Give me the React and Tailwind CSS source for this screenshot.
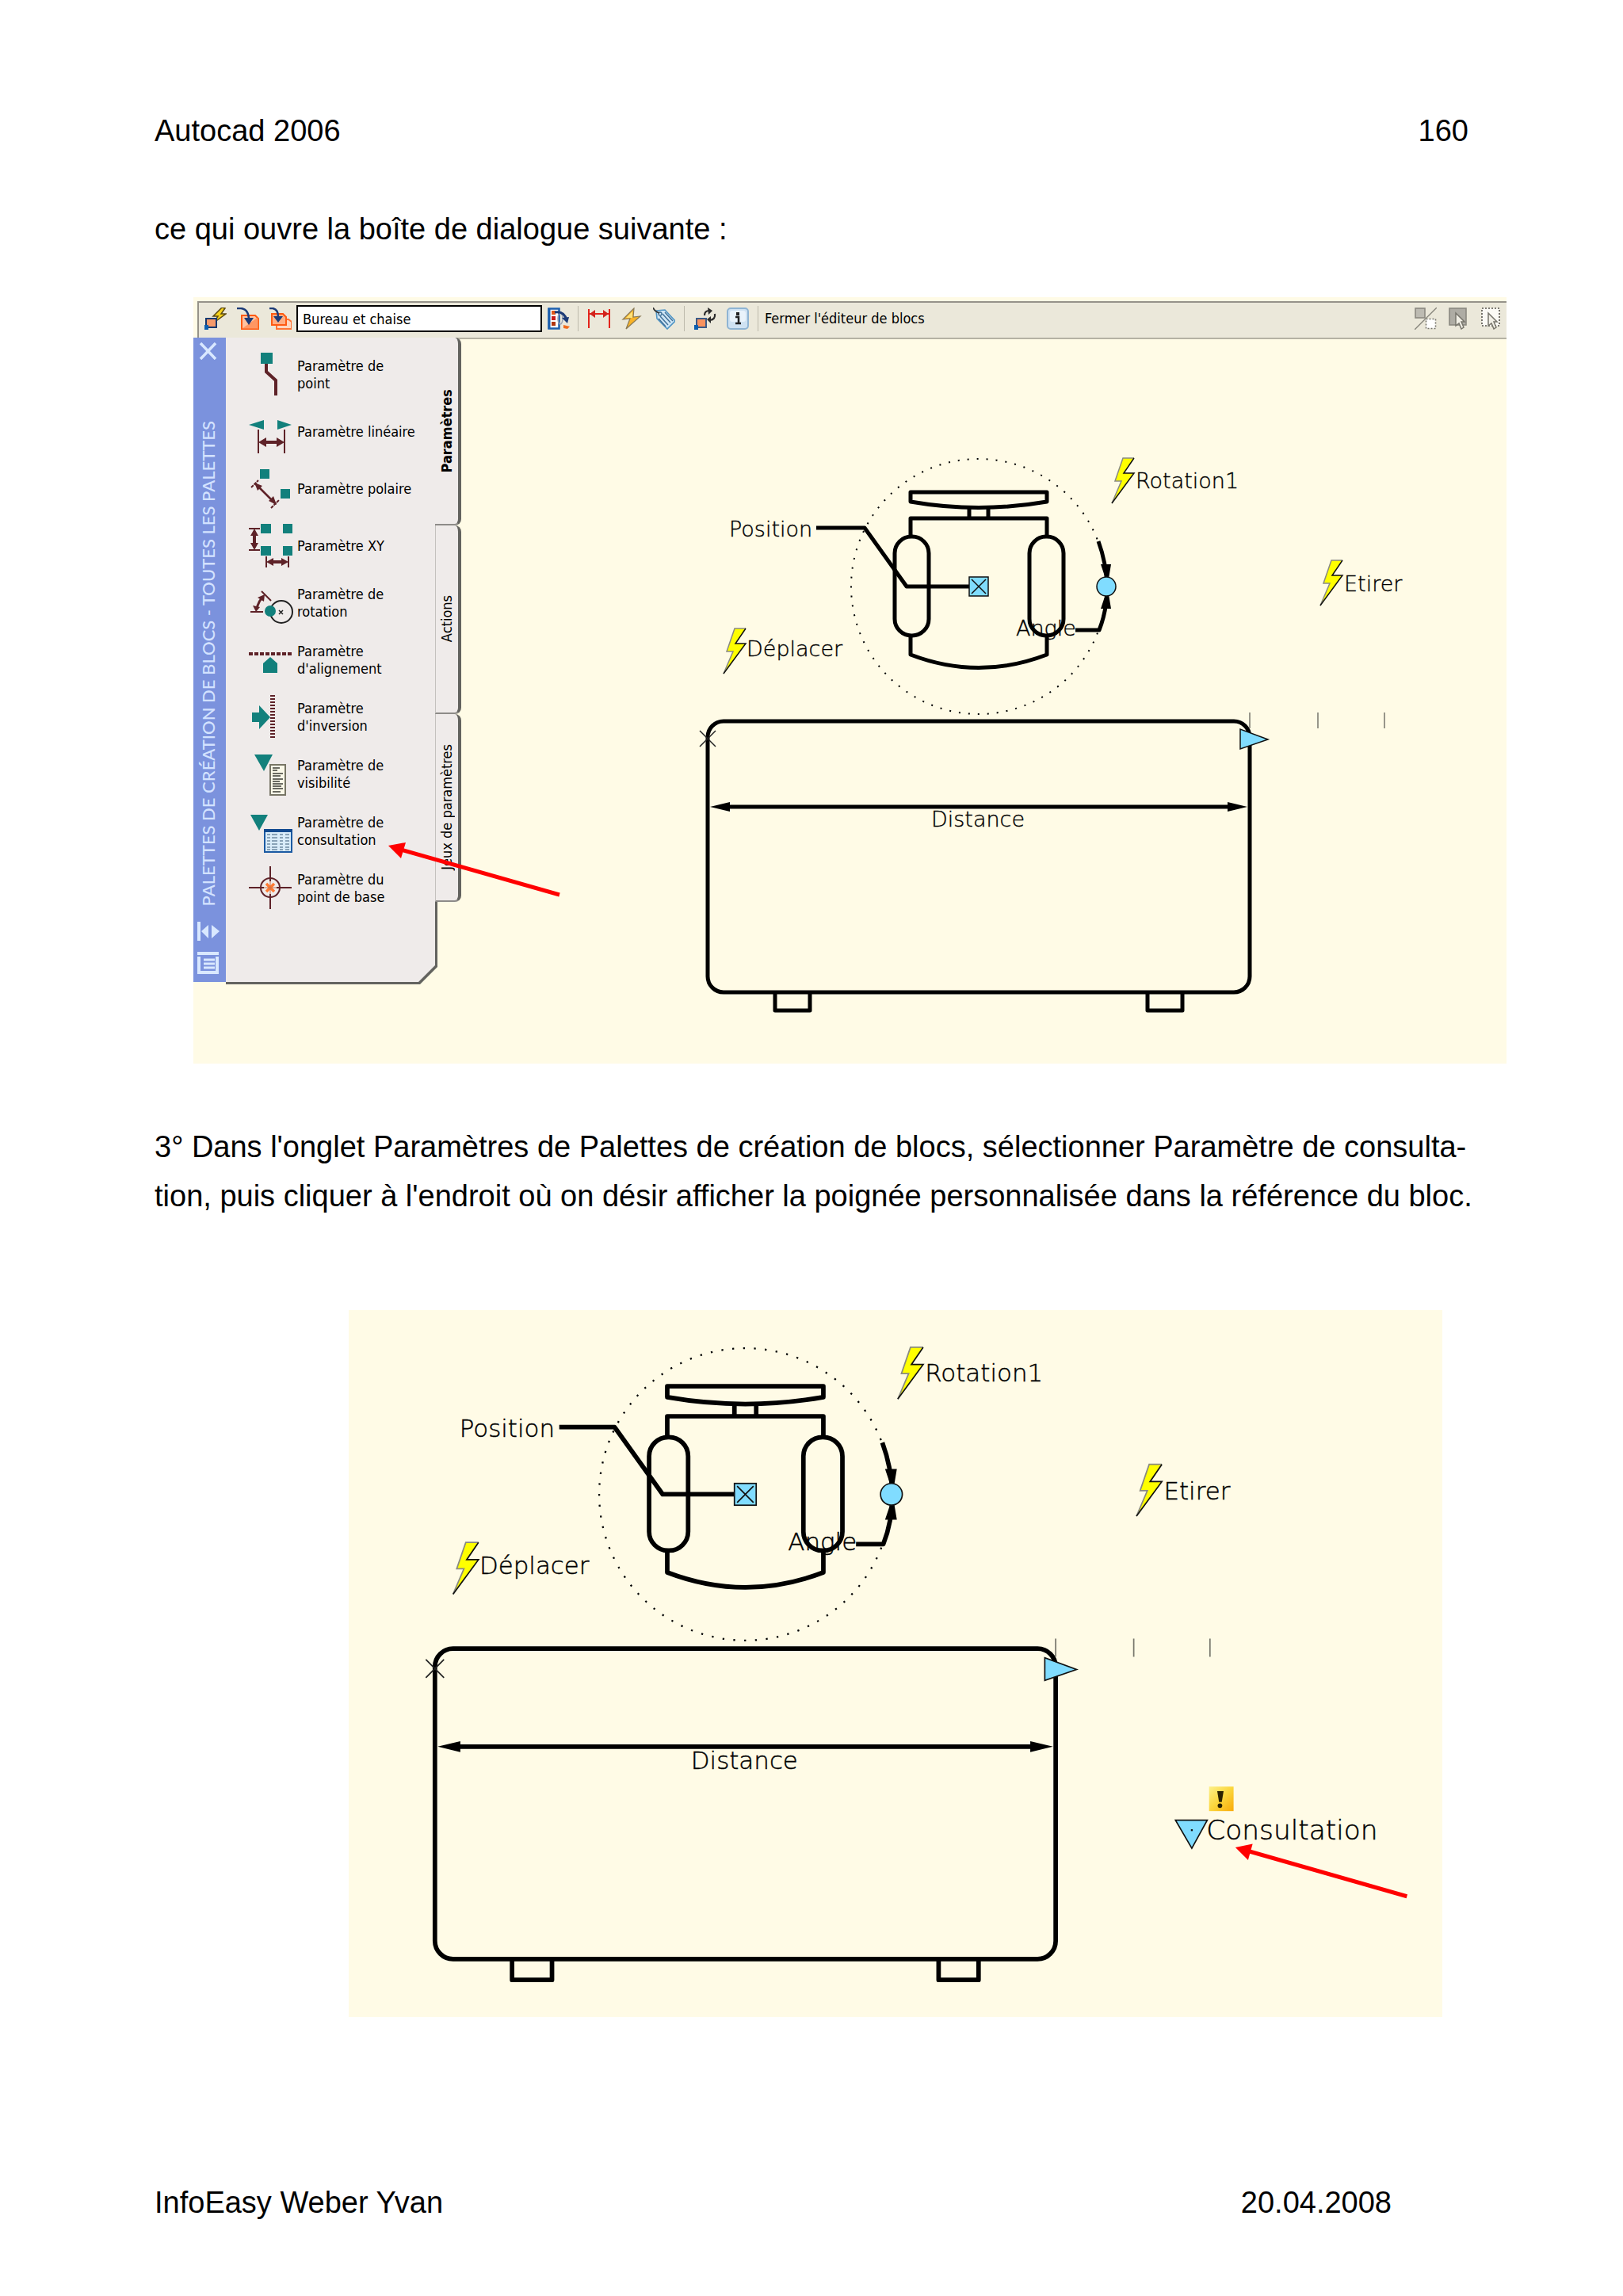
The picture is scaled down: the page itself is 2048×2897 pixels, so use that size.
import React from "react";

const TEAL = "#12807c";
const MAROON = "#5e2228";
const GRIP = "#80dcff";

/* ---------- Toolbar icons (28 x 28) ---------- */

function Icon({ children }) {
  return (
    <svg viewBox="0 0 28 28" className="h-7 w-7 shrink-0" fill="none" aria-hidden="true">
      {children}
    </svg>
  );
}

const BlockBoltIcon = () => (
  <Icon>
    <path d="M22 0L11 11h6l-5 8 15-11h-6l5-7z" fill="#f6d21c" stroke="#5c4a10" strokeWidth="1.5" />
    <rect x="2" y="14" width="13" height="11" fill="#f59a6b" stroke="#14386f" strokeWidth="2" />
    <rect x="0" y="22" width="5" height="6" fill="#0b5fb0" />
  </Icon>
);

const SaveBlockIcon = () => (
  <Icon>
    <path d="M6 10h17l4 4v13H6z" fill="#ffc3a0" stroke="#ff5a12" strokeWidth="2" />
    <path d="M6 27L27 12v15z" fill="#ff8548" opacity="0.7" />
    <path d="M0 1h5q10 1 10 15" stroke="#1c3b77" strokeWidth="2.5" />
    <path d="M9 13h12l-6 9z" fill="#1c3b77" />
  </Icon>
);

const SaveBlockAsIcon = () => (
  <Icon>
    <path d="M9 15h15l4 3v9H9z" fill="#ffd6bf" stroke="#ff7434" strokeWidth="2" />
    <path d="M3 8h14l4 4v10H3z" fill="#ffae83" stroke="#ff5a12" strokeWidth="2" />
    <path d="M0 1h4q7 1 7 11" stroke="#1c3b77" strokeWidth="2.5" />
    <path d="M5 11h12l-6 8z" fill="#1c3b77" />
  </Icon>
);

const AuthoringIcon = () => (
  <Icon>
    <rect x="1.5" y="1.5" width="13" height="25" fill="#fff" stroke="#1c5fae" strokeWidth="2.5" />
    <path d="M2 1v26" stroke="#1c5fae" strokeWidth="3" />
    <rect x="5" y="4" width="5" height="5" fill="#e0581c" />
    <rect x="5" y="11" width="5" height="5" fill="#c81c1c" />
    <rect x="5" y="18" width="5" height="5" fill="#b0360f" />
    <ellipse cx="16" cy="14" rx="3" ry="7" stroke="#9aa3b5" strokeWidth="1.5" />
    <path d="M9 6q12-2 15 10" stroke="#1c3b77" strokeWidth="3" />
    <path d="M18 13l9-1-2 8z" fill="#1c3b77" />
    <path d="M20 22l4 1 4 1-3 3-5-1z" fill="#f06a1c" />
  </Icon>
);

const DimensionIcon = () => (
  <Icon>
    <path d="M1 2v24M27 2v24M2 8h24" stroke="#e3241c" strokeWidth="2" />
    <path d="M2 8l7-5v10zM26 8l-7-5v10z" fill="#d2231c" />
  </Icon>
);

const ActionIcon = () => (
  <Icon>
    <path d="M17 1L3 15l9-1-5 13L25 11l-9 1z" fill="#f9b327" stroke="#8a7a55" strokeWidth="1.2" />
    <path d="M15 5L7 13h8z" fill="#ffe177" />
  </Icon>
);

const TagIcon = () => (
  <Icon>
    <path d="M4 4l11-1 13 14-10 10L5 14z" fill="#cfe6f5" stroke="#4f94c4" strokeWidth="1.6" />
    <path d="M9 11l10 11M12 8l10 11M15 6l10 11M7 14l9 10" stroke="#3f6f97" strokeWidth="1.4" />
    <circle cx="9" cy="8" r="2" stroke="#3d6d94" strokeWidth="1.3" />
    <path d="M0 0q2 5 8 7" stroke="#333" strokeWidth="1.8" />
  </Icon>
);

const SyncBlockIcon = () => (
  <Icon>
    <rect x="3" y="14" width="12" height="11" fill="#f8925f" stroke="#3b5a86" strokeWidth="2" />
    <rect x="0" y="22" width="5" height="6" fill="#0b5fb0" />
    <path d="M13 10q0-6 6-6M26 8q1 7-6 8" stroke="#2b2b2b" strokeWidth="2.2" />
    <path d="M17 0l6 4-5 5zM21 11v9l-5-5z" fill="#2b2b2b" />
  </Icon>
);

const InfoIcon = () => (
  <Icon>
    <rect x="1" y="1" width="26" height="26" rx="4" fill="#cfe2f2" stroke="#8fb4d3" strokeWidth="2" />
    <rect x="4" y="4" width="20" height="14" rx="3" fill="#e9f3fb" />
    <path d="M11 12h4v8M11 20h7" stroke="#222" strokeWidth="2.5" />
    <rect x="12" y="6" width="4" height="4" fill="#222" />
  </Icon>
);

const VisibilityModeIcon = () => (
  <Icon>
    <path d="M0 28L28 0" stroke="#85837a" strokeWidth="1.3" />
    <rect x="1" y="1" width="12" height="12" fill="#bdbbb2" stroke="#8b8980" strokeWidth="1.6" />
    <rect x="14.5" y="14.5" width="12" height="12" fill="#fff" stroke="#77756c" strokeWidth="1.6" strokeDasharray="2 2" />
  </Icon>
);

const Cursor = () => (
  <path d="M11 7l11 11h-4l3 7-3 2-3-7-4 3z" fill="#f1efe6" stroke="#77756c" strokeWidth="1.5" />
);

const MakeVisibleIcon = () => (
  <Icon>
    <rect x="3" y="1" width="21" height="21" fill="#aeaca4" stroke="#8b8980" strokeWidth="1.6" />
    <Cursor />
  </Icon>
);

const MakeInvisibleIcon = () => (
  <Icon>
    <rect x="3" y="1" width="22" height="22" fill="#fbfaf5" stroke="#55534c" strokeWidth="1.6" strokeDasharray="2 2" />
    <Cursor />
  </Icon>
);

function ToolButton({ label, children }) {
  return (
    <button type="button" aria-label={label} className="flex h-full w-[41px] shrink-0 items-center justify-center">
      {children}
    </button>
  );
}

const Separator = () => <span className="h-8 w-px shrink-0 bg-[#bdbaac]" />;

function Toolbar() {
  return (
    <div className="ml-[5px] flex h-12 items-center border-y-2 border-l-2 border-t-[#96938a] border-b-[#b5b2a3] border-l-[#96938a] bg-[#ebe8da] pb-1">
      <ToolButton label="Modifier ou créer une définition de bloc"><BlockBoltIcon /></ToolButton>
      <ToolButton label="Enregistrer le bloc"><SaveBlockIcon /></ToolButton>
      <ToolButton label="Enregistrer le bloc sous"><SaveBlockAsIcon /></ToolButton>
      <input
        aria-label="Nom du bloc"
        defaultValue="Bureau et chaise"
        className="h-[34px] w-[310px] min-w-0 border-2 border-black bg-white px-[6px] text-[18px] leading-6 text-black"
      />
      <ToolButton label="Palettes de création de blocs"><AuthoringIcon /></ToolButton>
      <div className="flex items-center gap-[5px] pl-1">
        <Separator />
        <div className="flex">
          <ToolButton label="Paramètre"><DimensionIcon /></ToolButton>
          <ToolButton label="Action"><ActionIcon /></ToolButton>
          <ToolButton label="Définir un attribut"><TagIcon /></ToolButton>
        </div>
        <Separator />
        <div className="flex">
          <ToolButton label="Mettre à jour le texte"><SyncBlockIcon /></ToolButton>
          <ToolButton label="En savoir plus"><InfoIcon /></ToolButton>
        </div>
        <Separator />
      </div>
      <button type="button" className="whitespace-nowrap pl-2 text-[18px] leading-6 text-black">
        Fermer l'éditeur de blocs
      </button>
      <div className="ml-auto flex">
        <ToolButton label="Mode de visibilité"><VisibilityModeIcon /></ToolButton>
        <ToolButton label="Rendre visible"><MakeVisibleIcon /></ToolButton>
        <ToolButton label="Rendre invisible"><MakeInvisibleIcon /></ToolButton>
      </div>
    </div>
  );
}

/* ---------- Palette icons (54 x 54) ---------- */

const paletteItems = [
  {
    lines: ["Paramètre de", "point"],
    art: (
      <>
        <path d="M22 13v11l12 11v19" stroke={MAROON} strokeWidth="4" />
        <rect x="15" y="0" width="15" height="14" fill={TEAL} />
      </>
    ),
  },
  {
    lines: ["Paramètre linéaire"],
    art: (
      <>
        <path d="M0 19l19-6v12zM54 19l-18-6v12z" fill={TEAL} />
        <path d="M12 25v30M45 25v30" stroke={MAROON} strokeWidth="2" />
        <path d="M16 41h25" stroke={MAROON} strokeWidth="4" />
        <path d="M12 41l10-6v12zM45 41l-10-6v12z" fill={MAROON} />
      </>
    ),
  },
  {
    lines: ["Paramètre polaire"],
    art: (
      <>
        <path d="M14 3h12v12H14zM40 28h12v12H40z" fill={TEAL} />
        <path d="M8 21l26 26" stroke={MAROON} strokeWidth="2.5" />
        <path d="M3 26l9-9M28 52l10-10" stroke={MAROON} strokeWidth="2" strokeDasharray="4 1" />
        <path d="M7 20l10 4-6 6zM35 48l-4-11-6 6z" fill={MAROON} />
      </>
    ),
  },
  {
    lines: ["Paramètre XY"],
    art: (
      <>
        <path d="M15 0h13v12H15zM43 0h12v12H43zM15 28h13v12H15zM43 28h12v12H43z" fill={TEAL} />
        <path d="M0 6h14M0 33h14M22 41v14M50 41v14" stroke={MAROON} strokeWidth="2" />
        <path d="M7 10v20M26 48h20" stroke={MAROON} strokeWidth="4" />
        <path d="M7 6l5 9H2zM7 33l5-9H2zM22 48l9-5v10zM50 48l-9-5v10z" fill={MAROON} />
      </>
    ),
  },
  {
    lines: ["Paramètre de", "rotation"],
    art: (
      <>
        <circle cx="41" cy="39" r="14" stroke="#222" strokeWidth="2" />
        <path d="M38 37l5 5M43 37l-5 5" stroke="#222" strokeWidth="1.5" />
        <circle cx="27" cy="38" r="7" fill={TEAL} />
        <path d="M2 39h16M16 13l12 12" stroke={MAROON} strokeWidth="2" />
        <path d="M10 35q2-9 7-14" stroke={MAROON} strokeWidth="3" />
        <path d="M9 39l-4-8 9 2zM20 17l-1 9-8-5z" fill={MAROON} />
      </>
    ),
  },
  {
    lines: ["Paramètre", "d'alignement"],
    art: (
      <>
        <path d="M0 20h54" stroke={MAROON} strokeWidth="4" strokeDasharray="5 2" />
        <path d="M27 24l9 8v12H18V32z" fill={TEAL} />
      </>
    ),
  },
  {
    lines: ["Paramètre", "d'inversion"],
    art: (
      <>
        <path d="M30 0v54" stroke={MAROON} strokeWidth="6" strokeDasharray="2 2" />
        <path d="M4 22h9v-9l14 15-14 15v-9H4z" fill={TEAL} />
      </>
    ),
  },
  {
    lines: ["Paramètre de", "visibilité"],
    art: (
      <>
        <path d="M7 3h23L19 24z" fill={TEAL} />
        <rect x="27" y="16" width="19" height="38" fill="#faf8e8" stroke="#777565" strokeWidth="2" />
        <path
          d="M30 20h9M30 23h6M30 27h13M30 30h10M30 34h13M30 37h9M30 40h13M30 43h11M30 46h13M30 50h10"
          stroke="#3b3b35"
          strokeWidth="1.3"
        />
      </>
    ),
  },
  {
    lines: ["Paramètre de", "consultation"],
    art: (
      <>
        <path d="M2 7h22L13 27z" fill={TEAL} />
        <rect x="20" y="26" width="34" height="28" fill="#d9ecfa" stroke="#1b5aa2" strokeWidth="2" />
        <path d="M19 27h36" stroke="#124a90" strokeWidth="4" />
        <path
          d="M23 32h4M29 32h7M39 32h4M46 32h5M23 36h4M29 36h7M39 36h4M46 36h5M23 40h4M29 40h7M39 40h4M46 40h5M23 44h4M29 44h7M39 44h4M46 44h5M23 48h4M29 48h7M39 48h4M46 48h5M23 51h4M29 51h7M39 51h4M46 51h5"
          stroke="#6f8aa3"
          strokeWidth="1.5"
        />
      </>
    ),
  },
  {
    lines: ["Paramètre du", "point de base"],
    art: (
      <>
        <path d="M27 0v19M27 35v19M0 27h19M35 27h19" stroke={MAROON} strokeWidth="2" />
        <circle cx="27" cy="27" r="12" stroke={MAROON} strokeWidth="2" />
        <path d="M22 22l10 10M32 22L22 32" stroke="#ff7a33" strokeWidth="3.5" />
        <path d="M27 19v16M19 27h16" stroke="#c9724a" strokeWidth="1" />
      </>
    ),
  },
];

const tabs = [
  { name: "Paramètres", active: true },
  { name: "Actions", active: false },
  { name: "Jeux de paramètres", active: false },
];

function PaletteTitleBar() {
  return (
    <div className="flex h-[813px] w-[41px] shrink-0 flex-col items-center bg-[#7b92dd] pt-[6px] pr-1 pb-[10px]">
      <button type="button" aria-label="Fermer la palette">
        <svg viewBox="0 0 24 22" className="block h-[22px] w-6" aria-hidden="true">
          <path d="M2 1l19 20M21 1L2 21" stroke="#d9e8ff" strokeWidth="3.5" />
        </svg>
      </button>
      <h2 className="mt-auto rotate-180 whitespace-nowrap font-['Lato'] text-[22px] leading-[28px] font-medium text-[#d3e2ff] [writing-mode:vertical-rl]">
        PALETTES DE CRÉATION DE BLOCS - TOUTES LES PALETTES
      </h2>
      <div className="mt-[20px] flex flex-col gap-[14px]">
        <button type="button" aria-label="Masquer automatiquement">
          <svg viewBox="0 0 28 24" className="block h-6 w-7" fill="#d9e8ff" aria-hidden="true">
            <path d="M0 0h4v24H0zM14 4v17L5 12zM18 4l10 8-10 9z" />
          </svg>
        </button>
        <button type="button" aria-label="Propriétés">
          <svg viewBox="0 0 28 28" className="block h-7 w-7" aria-hidden="true">
            <path d="M0 2h27" stroke="#d9e8ff" strokeWidth="4" />
            <path d="M2 6v20h23V6" stroke="#d9e8ff" strokeWidth="4" fill="none" />
            <path d="M8 10h14M8 15h14M8 20h14" stroke="#d9e8ff" strokeWidth="3" />
          </svg>
        </button>
      </div>
    </div>
  );
}

function Palette() {
  return (
    <aside className="flex h-[816px] shrink-0">
      <PaletteTitleBar />
      <div className="w-[267px] bg-[#63635f] [clip-path:polygon(0_0,100%_0,100%_calc(100%-22px),calc(100%-22px)_100%,0_100%)]">
        <ul className="mr-[3px] h-[813px] bg-[#efebea] pt-[10px] pl-[29px] [clip-path:polygon(0_0,100%_0,100%_calc(100%-21px),calc(100%-21px)_100%,0_100%)]">
          {paletteItems.map((item) => (
            <li key={item.lines.join(" ")}>
              <button type="button" className="flex h-[72px] w-full items-center gap-[7px] text-left">
                <svg viewBox="0 0 54 54" className="h-[54px] w-[54px] shrink-0 overflow-visible" fill="none" aria-hidden="true">
                  {item.art}
                </svg>
                <span className="whitespace-nowrap pt-[2px] text-[18px] leading-[22px] text-black">
                  {item.lines.map((line) => (
                    <span key={line} className="block">{line}</span>
                  ))}
                </span>
              </button>
            </li>
          ))}
        </ul>
      </div>
      <div role="tablist" aria-orientation="vertical" className="relative -ml-[3px] flex h-[712px] w-[33px] flex-col">
        {tabs.map((tab) => (
          <button
            key={tab.name}
            type="button"
            role="tab"
            aria-selected={tab.active}
            className={
              "flex flex-1 items-center justify-center rounded-r-[8px] border-r-[4px] border-r-[#63635f] border-b-2 border-b-[#8d8b88] bg-[#efebea] text-[18px] leading-[22px] text-black " +
              (tab.active ? "font-bold" : "border-l border-l-[#c4c1be]")
            }
          >
            <span className="rotate-180 whitespace-nowrap [writing-mode:vertical-rl]">{tab.name}</span>
          </button>
        ))}
      </div>
    </aside>
  );
}

/* ---------- CAD drawing ---------- */

function Bolt({ x, y }) {
  return (
    <g transform={`translate(${x} ${y})`}>
      <path d="M14 0h14L15 19h13L0 57l12-28H4z" fill="#ffff00" />
      <path d="M28 0H14L4 29h8L0 57" fill="none" stroke="#8a8a80" strokeWidth="1.5" />
      <path d="M28 0L15 19h13L0 57" fill="none" stroke="#111" strokeWidth="1.5" />
    </g>
  );
}

function RedArrow({ x, y }) {
  return (
    <g transform={`translate(${x} ${y})`}>
      <path d="M16 5L216 62" stroke="#ff0000" strokeWidth="5" />
      <path d="M0 0l22-4-6 20z" fill="#ff0000" />
    </g>
  );
}

function Drawing({ viewBox, children }) {
  return (
    <svg viewBox={viewBox} className="block w-full" fill="none" stroke="none" role="img" aria-label="Bloc bureau et chaise">
      <circle cx="1235" cy="740" r="161" stroke="#000" strokeWidth="2" strokeDasharray="2 10" />

      <g stroke="#000" strokeWidth="5" strokeLinejoin="round">
        <path d="M1149 621h172v12q-86 15-172 0z" />
        <path d="M1223 641v13M1247 641v13" />
        <path d="M1149 677v-23h172v23" />
        <rect x="1129" y="677" width="43" height="125" rx="21" />
        <rect x="1299" y="677" width="43" height="125" rx="21" />
        <path d="M1149 802v24q86 33 172 0v-24" />
        <path d="M1030 666h61l53 74h79" />
        <path d="M1357 795h30q10-25 10-55" />
        <path d="M1386 683q10 27 11 57" />
        <rect x="893" y="910" width="684" height="342" rx="20" />
        <path d="M978 1252v23h44v-23M1448 1252v23h44v-23" />
        <path d="M910 1018h650" />
      </g>
      <path d="M1389 712h13l-3 18h-4zM1389 768h13l-3-18h-4z" fill="#000" />
      <path d="M896 1018l25-6v12zM1574 1018l-25-6v12z" fill="#000" />
      <path d="M883 922l20 20M903 922l-20 20" stroke="#222" strokeWidth="1.5" />
      <path d="M1577 899v20M1663 899v20M1747 899v20" stroke="#77766c" strokeWidth="1.5" />

      <g fill={GRIP} stroke="#111" strokeWidth="1.5">
        <rect x="1223" y="728" width="24" height="24" />
        <path d="M1226 731l18 18M1244 731l-18 18" />
        <circle cx="1396" cy="740" r="12" />
        <path d="M1565 920v25l35-12z" />
      </g>

      <Bolt x={1403} y={578} />
      <Bolt x={1666} y={707} />
      <Bolt x={913} y={793} />

      <g fill="#000" stroke="#000" strokeWidth="0.4" className="font-['DejaVu_Sans'] text-[27px] font-extralight">
        <text x="920" y="677">Position</text>
        <text x="1282" y="802">Angle</text>
        <text x="942" y="828">Déplacer</text>
        <text x="1433" y="616">Rotation1</text>
        <text x="1696" y="746">Etirer</text>
        <text x="1175" y="1043">Distance</text>
      </g>
      {children}
    </svg>
  );
}

function Lookup() {
  return (
    <>
      <defs>
        <linearGradient id="alert" x1="0" y1="0" x2="1" y2="1">
          <stop offset="0" stopColor="#fdf08a" />
          <stop offset="0.5" stopColor="#fbd63c" />
          <stop offset="1" stopColor="#f9a908" />
        </linearGradient>
      </defs>
      <path d="M1709 1099h35l-17 31z" fill={GRIP} stroke="#111" strokeWidth="1.5" />
      <rect x="1726" y="1109" width="2" height="2" fill="#111" />
      <rect x="1746" y="1062" width="27" height="27" fill="url(#alert)" />
      <path d="M1755 1067h7l-2 12h-3z" fill="#2a2200" />
      <circle cx="1758" cy="1083" r="2.5" fill="#2a2200" />
      <text
        x="1743"
        y="1120"
        fill="#000"
        stroke="#000"
        strokeWidth="0.4"
        className="font-['DejaVu_Sans'] text-[30px] font-extralight"
      >
        Consultation
      </text>
      <g transform="translate(1775 1129)">
        <path d="M14 4L189 54" stroke="#ff0000" strokeWidth="4.5" />
        <path d="M0 0l19-4-5 18z" fill="#ff0000" />
      </g>
    </>
  );
}

/* ---------- Page ---------- */

export default function App() {
  return (
    <div className="min-h-screen bg-white font-['Liberation_Sans',Arial,sans-serif] text-[38px] leading-[62px] text-black">
      <div className="px-[195px] pt-[134px] pb-[86px]">
        <header className="flex justify-between">
          <span>Autocad 2006</span>
          <span>160</span>
        </header>

        <main>
          <p className="mt-[62px]">ce qui ouvre la boîte de dialogue suivante :</p>

          <figure className="relative mt-[55px] -mr-[48px] ml-[49px] bg-[#fffbe6] pt-[5px] font-['DejaVu_Sans_Condensed','DejaVu_Sans',sans-serif]">
            <Toolbar />
            <div className="-mt-[2px] flex items-start">
              <Palette />
              <div className="min-w-0 flex-1">
                <Drawing viewBox="582 426 1319 916" />
              </div>
            </div>
            <svg viewBox="0 0 220 70" className="absolute top-[688px] left-[245px] h-[70px] w-[220px]" fill="none" aria-hidden="true">
              <RedArrow x={1} y={4} />
            </svg>
          </figure>

          <p className="mt-[74px] -mr-2">
            3° Dans l'onglet Paramètres de Palettes de création de blocs, sélectionner Paramètre de consulta-
            <br />
            tion, puis cliquer à l'endroit où on désir afficher la poignée personnalisée dans la référence du bloc.
          </p>

          <figure className="mt-[113px] mr-[33px] ml-[245px] bg-[#fffbe6]">
            <Drawing viewBox="798 537 1205 779">
              <Lookup />
            </Drawing>
          </figure>
        </main>

        <footer className="mt-[203px] flex justify-between pr-[97px]">
          <span>InfoEasy Weber Yvan</span>
          <span>20.04.2008</span>
        </footer>
      </div>
    </div>
  );
}
